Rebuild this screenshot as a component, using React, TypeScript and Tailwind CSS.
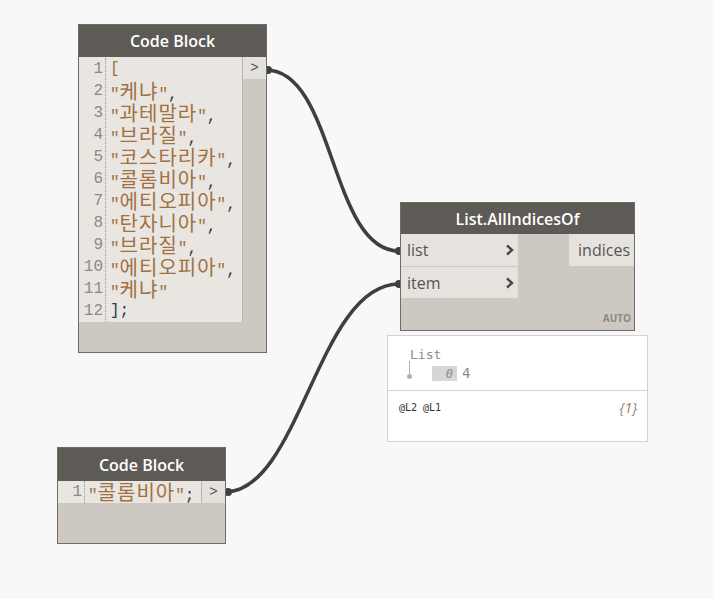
import React from "react";

const mono = { fontFamily: '"Liberation Mono", "Noto Sans CJK KR", monospace' };
const sans = { fontFamily: '"Open Sans", "Noto Sans", sans-serif' };

function Str({ s, tail }: { s: string; tail?: string }) {
  return (
    <span>
      <span className="text-[#a0703f]">"</span>
      <span
        className="inline-block text-[#a0703f] text-[20px] leading-[22px] tracking-[1px]"
        style={{ fontFamily: '"Noto Sans CJK KR", sans-serif' }}
      >
        {s}
      </span>
      <span className="text-[#a0703f]">"</span>
      {tail && <span className="text-[#3a3a3a]">{tail}</span>}
    </span>
  );
}

const lines: React.ReactNode[] = [
  <span className="text-[#a0703f]">[</span>,
  <Str s="케냐" tail="," />,
  <Str s="과테말라" tail="," />,
  <Str s="브라질" tail="," />,
  <Str s="코스타리카" tail="," />,
  <Str s="콜롬비아" tail="," />,
  <Str s="에티오피아" tail="," />,
  <Str s="탄자니아" tail="," />,
  <Str s="브라질" tail="," />,
  <Str s="에티오피아" tail="," />,
  <Str s="케냐" />,
  <span className="text-[#2f3a4a]">];</span>,
];

function Header({ title, h }: { title: string; h: string }) {
  return (
    <div
      className={`${h} bg-[#5e5a56] flex items-center justify-center text-white font-semibold text-[16px]`}
      style={sans}
    >
      {title}
    </div>
  );
}

function Chevron() {
  return (
    <svg width="9" height="12" viewBox="0 0 9 12">
      <path d="M2 1.5 L7 6 L2 10.5" fill="none" stroke="#4a4744" strokeWidth="2.4" />
    </svg>
  );
}

export default function App() {
  return (
    <div className="relative w-[713px] h-[599px] bg-[#f8f8f8] overflow-hidden">
      {/* wires */}
      <svg className="absolute left-0 top-0" width="713" height="599">
        <path d="M266 70 C 335 70, 330 251, 399 251" fill="none" stroke="#3f3f3f" strokeWidth="3.5" />
        <path d="M225 492 C 300 492, 318 284, 399 284" fill="none" stroke="#3f3f3f" strokeWidth="3.5" />
        <circle cx="268" cy="70" r="4" fill="#3f3f3f" />
        <circle cx="228" cy="492" r="4" fill="#3f3f3f" />
        <circle cx="399" cy="251" r="4" fill="#3f3f3f" />
        <circle cx="399" cy="284" r="4" fill="#3f3f3f" />
      </svg>

      {/* Code Block 1 */}
      <div className="absolute left-[78px] top-[24px] w-[189px] h-[329px] border border-[#6f6c68] bg-[#cdc9c2] flex flex-col">
        <Header title="Code Block" h="h-[32px]" />
        <div className="flex">
          <div className="w-[163px] h-[265px] bg-[#e9e6e2] flex pt-[1px]" style={mono}>
            <div className="w-[27px] border-r border-dotted border-[#9a9a9a] flex flex-col items-end pr-[2px] text-[#8a8a8a] text-[16px]">
              {lines.map((_, i) => (
                <div key={i} className="h-[22px] leading-[22px]">
                  {i + 1}
                </div>
              ))}
            </div>
            <div className="flex flex-col pl-[4px] text-[16px]">
              {lines.map((l, i) => (
                <div key={i} className="h-[22px] leading-[22px] whitespace-nowrap">
                  {l}
                </div>
              ))}
            </div>
          </div>
          <div className="w-[24px] border-l border-[#b8b4ae]">
            <div className="h-[22px] bg-[#e4e0db] flex items-center justify-center text-[#4a5a6a] text-[14px]" style={mono}>
              &gt;
            </div>
          </div>
        </div>
      </div>

      {/* List.AllIndicesOf */}
      <div className="absolute left-[400px] top-[202px] w-[235px] h-[129px] border border-[#6f6c68] bg-[#cdc9c2] flex flex-col">
        <Header title="List.AllIndicesOf" h="h-[31px]" />
        <div className="flex flex-1 relative">
          <div className="w-[117px] flex flex-col">
            <div className="h-[33px] bg-[#e6e3de] border-b border-[#cdc9c2] flex items-center justify-between pl-[6px] pr-[4px] text-[16px] text-[#555]" style={sans}>
              <span>list</span>
              <Chevron />
            </div>
            <div className="h-[31px] bg-[#e6e3de] flex items-center justify-between pl-[6px] pr-[4px] text-[16px] text-[#555]" style={sans}>
              <span>item</span>
              <Chevron />
            </div>
          </div>
          <div className="flex-1 flex flex-col items-end">
            <div className="h-[32px] w-[65px] bg-[#e6e3de] flex items-center justify-end pr-[4px] text-[16px] text-[#555]" style={sans}>
              indices
            </div>
            <div className="flex-1" />
            <div className="pr-[3px] pb-[4px] text-[10px] font-bold text-[#8c8782]" style={sans}>
              AUTO
            </div>
          </div>
        </div>
      </div>

      {/* Preview bubble */}
      <div className="absolute left-[387px] top-[335px] w-[261px] h-[107px] bg-white border border-[#d2d2d2] flex flex-col">
        <div className="h-[55px] border-b border-[#d2d2d2] relative">
          <div className="absolute left-[22px] top-[9px] text-[13px] text-[#8c8c8c]" style={{ fontFamily: '"DejaVu Sans Mono", monospace' }}>
            List
          </div>
          <div className="absolute left-[21px] top-[25px] w-px h-[15px] bg-[#b0b0b0]" />
          <div className="absolute left-[19px] top-[38px] w-[5px] h-[5px] rounded-full bg-[#b0b0b0]" />
          <div className="absolute left-[44px] top-[27px] flex items-center" style={{ fontFamily: '"DejaVu Sans Mono", monospace' }}>
            <div className="w-[25px] h-[15px] bg-[#d6d6d6] flex items-center justify-end pr-[4px] text-[12px] italic text-[#8c8c8c]">0</div>
            <div className="ml-[5px] text-[14px] text-[#8c8c8c]">4</div>
          </div>
        </div>
        <div className="flex justify-between items-center pl-[11px] pr-[10px] pt-[6px]">
          <span className="text-[10px] text-[#333]" style={{ fontFamily: '"DejaVu Sans Mono", monospace' }}>@L2 @L1</span>
          <span className="text-[14px] italic text-[#888]" style={sans}>
            {"{"}
            <span className="text-[#b5702f]">1</span>
            {"}"}
          </span>
        </div>
      </div>

      {/* Code Block 2 */}
      <div className="absolute left-[57px] top-[447px] w-[169px] h-[97px] border border-[#6f6c68] bg-[#cdc9c2] flex flex-col">
        <Header title="Code Block" h="h-[33px]" />
        <div className="flex">
          <div className="w-[144px] h-[22px] bg-[#e9e6e2] flex" style={mono}>
            <div className="w-[27px] border-r border-dotted border-[#9a9a9a] flex justify-end pr-[2px] text-[#8a8a8a] text-[16px] leading-[22px]">
              1
            </div>
            <div className="pl-[3px] text-[16px] leading-[22px] whitespace-nowrap">
              <Str s="콜롬비아" tail=";" />
            </div>
          </div>
          <div className="w-[24px] border-l border-[#b8b4ae]">
            <div className="h-[22px] bg-[#e4e0db] flex items-center justify-center text-[#4a5a6a] text-[14px]" style={mono}>
              &gt;
            </div>
          </div>
        </div>
      </div>
    </div>
  );
}
